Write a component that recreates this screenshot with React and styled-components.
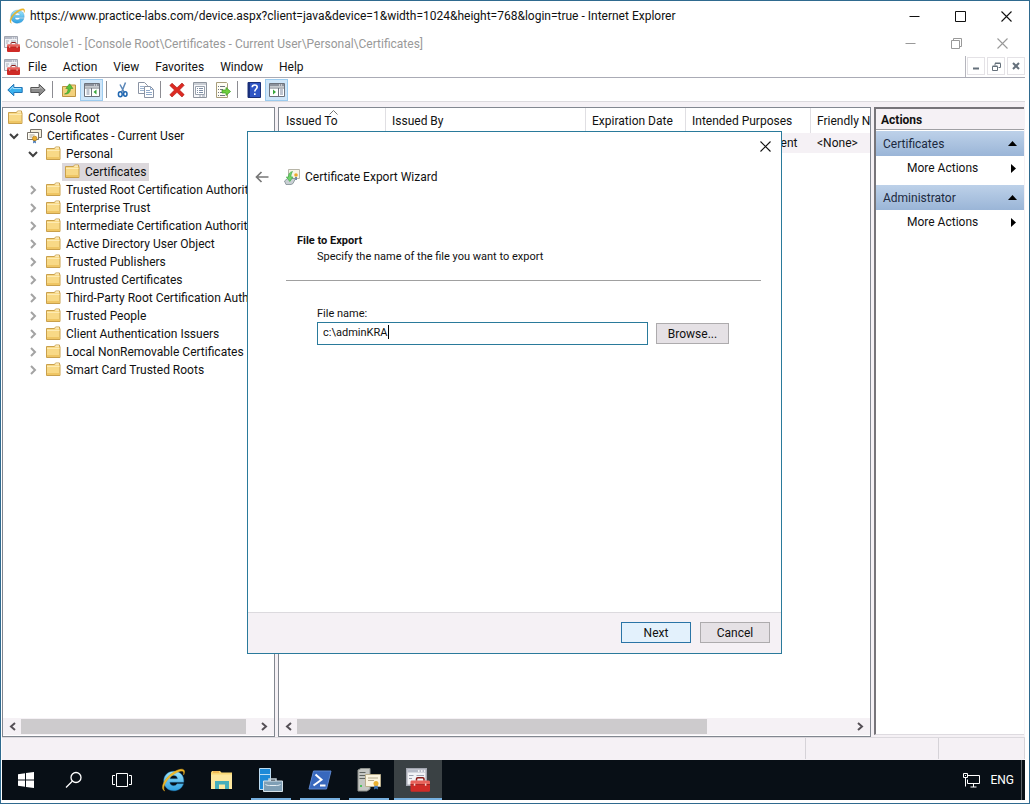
import React from "react";
import styled, { createGlobalStyle, css } from "styled-components";

const ui = 'Roboto, "Open Sans", "Noto Sans", sans-serif';
const line = "#828790";
const face = "#f5f1f5";
const accent = "#2a7a9b";

const Global = createGlobalStyle`
  *, *::before, *::after { box-sizing: border-box; }
  body { margin: 0; background: #fff; font: 12px/18px ${ui}; color: #111; }
  button { font: inherit; color: inherit; padding: 0; margin: 0; border: 0; background: none; }
  svg { display: block; flex: none; }
`;

const Desktop = styled.div`
  min-height: 100vh;
  display: flex;
  flex-direction: column;
  border: 1px solid #2f6a8f;
  background: #fff;
`;

const Session = styled.div`
  flex: 1;
  display: flex;
  flex-direction: column;
  padding: 0 4px 3px 1px;
`;

const TitleBar = styled.header`
  display: flex;
  align-items: center;
  height: 30px;
  padding-left: 8px;
  gap: 5px;
`;

const ConsoleTitle = styled(TitleBar)`
  height: 25px;
  padding-left: 2px;
  color: #999;
`;

const Title = styled.h1`
  margin: 0;
  flex: 1;
  min-width: 0;
  font-size: 12px;
  font-weight: 400;
  white-space: nowrap;
  overflow: hidden;
`;

const Controls = styled.div`
  display: flex;
`;

const WindowButton = styled.button`
  width: 46px;
  height: 24px;
  display: grid;
  place-items: center;
`;

const MenuBar = styled.nav`
  display: flex;
  align-items: center;
  height: 22px;
  padding-left: 2px;
  border-bottom: 1px solid #aaabb5;
`;

const MenuItem = styled.button`
  height: 20px;
  padding: 0 8px;
`;

const MdiControls = styled.div`
  display: flex;
  align-self: stretch;
  gap: 2px;
  margin-left: auto;
  padding: 1px 0 1px 1px;
  border-left: 1px solid #b5b5bd;
`;

const MdiButton = styled.button`
  width: 18px;
  height: 18px;
  display: grid;
  place-items: center;
  border: 1px solid #e4e2e6;
  background: #fff;
`;

const ToolBar = styled.div`
  display: flex;
  align-items: center;
  height: 24px;
  padding-left: 1px;
  border-bottom: 1px solid #dcdade;
`;

const ToolButton = styled.button`
  width: 23px;
  height: 22px;
  display: grid;
  place-items: center;
  border: 1px solid ${(p) => (p.$on ? "#9ccbee" : "transparent")};
  background: ${(p) => (p.$on ? "#cfe6f9" : "transparent")};
`;

const ToolRule = styled.span`
  width: 1px;
  height: 17px;
  margin: 0 4px 0 3px;
  background: #8c8c92;
`;

const Workspace = styled.main`
  position: relative;
  flex: 1;
  display: flex;
  padding: 5px 1px 0 0;
  gap: 3px;
  background: ${face};
`;

const Pane = styled.section`
  display: flex;
  flex-direction: column;
  min-width: 0;
  background: #fff;
  border: 1px solid ${line};
  overflow: hidden;
`;

const TreePane = styled(Pane)`
  flex: 0 0 273px;
`;

const ListPane = styled(Pane)`
  flex: 1;
`;

const Tree = styled.ul`
  list-style: none;
  margin: 0;
  padding: 1px 0 0;
  flex: 1;
`;

const TreeRow = styled.li`
  display: flex;
  align-items: center;
  height: 18px;
  padding-left: ${(p) => (p.$level ? p.$level * 19 - 14 : 2)}px;
`;

const Twisty = styled.button`
  flex: none;
  width: 16px;
  height: 18px;
  padding-left: 1px;
`;

const TwistyGap = styled.span`
  flex: none;
  width: 16px;
`;

const TreeLabel = styled.span`
  display: flex;
  align-items: center;
  gap: 4px;
  height: 18px;
  padding: 0 3px;
  white-space: nowrap;
  background: ${(p) => (p.$selected ? "#dcd8dc" : "transparent")};
`;

const ScrollBar = styled.div`
  display: flex;
  height: 17px;
  margin-bottom: 1px;
  padding: 1px 1px 1px 0;
  background: ${face};
`;

const ScrollArrow = styled.button`
  width: 18px;
  display: grid;
  place-items: center;
`;

const ScrollTrack = styled.div`
  flex: 1;
`;

const ScrollThumb = styled.div`
  width: ${(p) => p.$size}%;
  height: 100%;
  background: #cdcbcd;
`;

const ListBody = styled.div`
  flex: 1;
  overflow: hidden;
`;

const Table = styled.table`
  width: 100%;
  table-layout: fixed;
  border-collapse: separate;
  border-spacing: 0;
  white-space: nowrap;

  th, td { padding: 0 0 0 6px; text-align: left; font-weight: 400; overflow: hidden; }
  th { height: 25px; border-right: 1px solid #e0dfe3; }
  th:last-child { border-right: 0; }
  td { height: 20px; background: ${face}; }
`;

const SortHeader = styled.span`
  position: relative;
  display: block;
  padding-left: 1px;
`;

const SortMark = styled.svg`
  position: absolute;
  left: 44px;
  top: -2px;
`;

const ActionsPane = styled.aside`
  flex: 0 0 150px;
  background: #fff;
  border-top: 2px solid #77757a;
  border-left: 2px solid #77757a;
  border-bottom: 1px solid #dedbe0;
  margin-bottom: 2px;
`;

const ActionsTitle = styled.h2`
  margin: 0 0 1px;
  height: 21px;
  padding: 1px 0 0 5px;
  font-size: 12px;
  line-height: 20px;
  font-weight: 700;
  background: ${face};
  border-bottom: 1px solid #a0a0a4;
`;

const ActionHead = styled.button`
  display: flex;
  align-items: center;
  justify-content: space-between;
  width: 100%;
  height: 25px;
  padding: 0 7px;
  color: #1c2a40;
  background: linear-gradient(#bdd1e9, #9ab5d7);
`;

const ActionItem = styled.button`
  display: flex;
  align-items: center;
  justify-content: space-between;
  width: 100%;
  height: 24px;
  margin-bottom: 5px;
  padding: 0 8px 0 31px;
`;

const StatusBar = styled.footer`
  display: flex;
  height: 23px;
  padding-bottom: 1px;
  background: ${face};
  border-top: 1px solid #dcd9de;
`;

const StatusCell = styled.span`
  flex: ${(p) => (p.$width ? `0 0 ${p.$width}px` : 1)};
  border-right: 1px solid #d6d3d8;
`;

const Dialog = styled.div`
  position: absolute;
  left: 245px;
  top: 29px;
  width: 535px;
  height: 523px;
  display: flex;
  flex-direction: column;
  background: #fff;
  border: 1px solid ${accent};
`;

const DialogTop = styled.div`
  display: flex;
  justify-content: flex-end;
  padding: 2px 4px 0 0;
`;

const DialogClose = styled.button`
  width: 24px;
  height: 24px;
  display: grid;
  place-items: center;
`;

const DialogHead = styled.div`
  display: flex;
  align-items: center;
  height: 38px;
  padding-left: 6px;
`;

const BackButton = styled.button`
  width: 16px;
  height: 20px;
  margin-right: 14px;
  display: grid;
  place-items: center;
`;

const DialogTitle = styled.h2`
  margin: 0 0 0 5px;
  font-size: 12px;
  font-weight: 400;
`;

const DialogBody = styled.form`
  flex: 1;
  display: flex;
  flex-direction: column;
  font-size: 11px;
  line-height: 16px;
`;

const PageIntro = styled.div`
  margin: 37px 20px 0 38px;
  padding: 0 11px 15px;
  border-bottom: 1px solid #a0a0a0;
`;

const PageHeading = styled.h3`
  margin: 0;
  font-size: 11px;
  line-height: 16px;
  font-weight: 700;
`;

const PageText = styled.p`
  margin: 0 0 0 20px;
`;

const Field = styled.div`
  flex: 1;
  padding: 25px 52px 0 69px;
`;

const FieldRow = styled.div`
  display: flex;
  align-items: center;
  gap: 8px;
`;

const InputWrap = styled.span`
  position: relative;
  flex: 1;
  display: flex;
`;

const FileInput = styled.input`
  width: 100%;
  height: 23px;
  padding: 0 5px 2px;
  border: 1px solid ${accent};
  outline: 0;
  font: 11px/16px ${ui};
  color: #111;
  background: #fff;
`;

const Caret = styled.span`
  position: absolute;
  left: 71px;
  top: 3px;
  width: 1px;
  height: 14px;
  background: #000;
`;

const FieldLabel = styled.label`
  display: block;
`;

const PushButton = styled.button`
  width: ${(p) => p.$width}px;
  height: 21px;
  padding-top: 1px;
  line-height: 18px;
  font-size: 12px;
  border: 1px solid #adabad;
  background: #e5e1e5;
  ${(p) =>
    p.$primary &&
    css`
      border-color: #2a74a6;
      background: #e3f1fc;
    `}
`;

const DialogFooter = styled.div`
  display: flex;
  justify-content: flex-end;
  gap: 9px;
  height: 41px;
  padding: 9px 11px 0 0;
  background: ${face};
  border-top: 1px solid #dcdade;
`;

const TaskBar = styled.footer`
  display: flex;
  height: 40px;
  gap: 1px;
  background: #080f16;
  color: #fff;
`;

const TaskButton = styled.button`
  width: 48px;
  height: 40px;
  display: grid;
  place-items: center;
  background: ${(p) => (p.$active ? "#3a4144" : "transparent")};
  position: relative;

  &::after {
    content: "";
    position: absolute;
    bottom: 0;
    left: ${(p) => (p.$active ? 0 : 4)}px;
    right: ${(p) => (p.$active ? 0 : 4)}px;
    height: 2px;
    background: ${(p) => (p.$running ? "#76b0e0" : "transparent")};
  }
`;

const Tray = styled.div`
  display: flex;
  align-items: center;
  gap: 10px;
  margin-left: auto;
  padding-right: 6px;
`;

const ShowDesktop = styled.button`
  width: 4px;
  border-left: 1px solid #5b6166;
`;

function Svg({ w = 16, h = w, box = `0 0 ${w} ${h}`, children }) {
  return (
    <svg width={w} height={h} viewBox={box} fill="none" aria-hidden="true">
      {children}
    </svg>
  );
}

function IeIcon({ size, dark }) {
  const id = dark ? "ieDark" : "ieLight";
  return (
    <Svg w={size} box="0 0 24 24">
      <defs>
        <linearGradient id={id} x1="0" y1="0" x2="0" y2="1">
          <stop offset="0" stopColor="#9ce4fc" />
          <stop offset="1" stopColor="#2fa0e0" />
        </linearGradient>
      </defs>
      <path d="M22.500 15.800h-6.500c-.7 1.300-1.800 1.900-3.300 1.900-2.200 0-3.800-1.300-3.900-3.500h14c.5-6.600-3.600-11-9.900-11C7 3.200 2.700 7.300 2.700 13s4.200 9.800 10 9.800c4.600 0 8.300-2.500 9.800-7zM9 10.800c.3-2.100 1.700-3.300 3.800-3.300s3.500 1.200 3.700 3.300z" fill={`url(#${id})`} stroke="#1c7fc0" strokeWidth=".4" />
      <path d="M3.600 22.900C-.8 20.900 2.300 12.500 8.500 7.200 13.500 2.900 20.500-.3 22.800 2c1 1 .8 2.800-.2 4.800.4-1.800.2-3-.7-3.500-2.200-1.100-7.600 1.500-11.800 5C4.900 12.700 1 19.500 3.600 22.900z" fill="#f4bd2b" stroke="#dca11c" strokeWidth=".6" />
    </Svg>
  );
}

function ToolboxIcon({ size = 16 }) {
  return (
    <Svg w={size} box="0 0 16 16">
      <path d="M.5.5h13v11H.5z" fill="#f2f3f6" stroke="#a3a7b1" />
      <path d="M1 1h12v2H1z" fill="#b6bbc7" />
      <path d="M8 2h1M10 2h1M12 2h.7" stroke="#fff" />
      <path d="M2 5h3M2 7h2M7 5h5" stroke="#9aa0ae" strokeWidth=".8" />
      <path d="M7 8.500V7.300c0-.5.300-.8.800-.8h3.400c.5 0 .8.300.8.800v1.200" stroke="#8a1c18" />
      <path d="M3 9.200c0-.5.400-.9 1-.9h11c.6 0 1 .4 1 .9V11H3z" fill="#e8625b" />
      <path d="M3 11h13v4c0 .5-.4.900-1 .9H4c-.6 0-1-.4-1-.9z" fill="#cf2b27" />
      <path d="M3 11h13" stroke="#9c1915" strokeWidth=".5" />
      <path d="M5.200 10.300h1v1.500h-1zM12.600 10.300h1v1.500h-1z" fill="#f4d3ce" />
    </Svg>
  );
}

function FolderIcon() {
  return (
    <Svg>
      <path d="M.5 2.500h8l1-1.500h4v1.500h.5v11H.5z" fill="#f8d986" stroke="#c9a04c" />
      <path d="M9.500 2h3.500" stroke="#fff8df" />
      <path d="M1 4.500h12.500" stroke="#fdebb4" />
      <path d="M1 11h12.500v2H1z" fill="#efc665" />
    </Svg>
  );
}

function CertStoreIcon() {
  return (
    <Svg>
      <path d="M3.500 1.500h11v8h-11z" fill="#f4eedc" stroke="#77726a" />
      <path d="M.5 4.500h11v7H.5z" fill="#fffdf4" stroke="#77726a" />
      <path d="M2.500 7h5M2.500 9h3" stroke="#a9a396" />
      <path d="M6.500 11.500 6 15.500l1.500-1 1.500 1-.5-4z" fill="#3f76b7" />
      <circle cx="7.700" cy="10.500" r="2.300" fill="#e9ac2c" stroke="#b17a12" strokeWidth=".7" />
    </Svg>
  );
}

function ExportIcon() {
  return (
    <Svg>
      <path d="M4.500.5h11v9h-11z" fill="#f7f4e6" stroke="#b7b5a8" />
      <circle cx="12" cy="6" r="1.800" fill="#eaa92b" />
      <path d="M11 8h2v3h-2z" fill="#6f87a8" />
      <path d="m.5 12 3-2.500h8L9 14.500l-2 1H2z" fill="#c9d0d4" stroke="#7e8a90" strokeWidth=".8" />
      <path d="M8.500 2.500C5.500 3 4.500 5 4.500 8H2.300l3.500 4.500L9 8H7c0-2 .3-3.500 1.500-5.500z" fill="#6fd36a" stroke="#3ca344" strokeWidth=".6" />
    </Svg>
  );
}

const Chevron = ({ open }) => (
  <Svg w={10}>
    {open ? <path d="m1 3 4 4 4-4" stroke="#404040" strokeWidth="2" /> : <path d="m3 1 4 4-4 4" stroke="#a3a3a3" strokeWidth="2" />}
  </Svg>
);

const ScrollChevron = ({ right }) => (
  <Svg w={9}>
    <path d={right ? "m2 1 4 3.500L2 8" : "M7 1 3 4.500 7 8"} stroke="#555056" strokeWidth="2" />
  </Svg>
);

const CrossIcon = ({ color }) => (
  <Svg w={11}>
    <path d="m.5.5 10 10m0-10-10 10" stroke={color} strokeWidth="1.100" />
  </Svg>
);

const MinusIcon = ({ color }) => (
  <Svg w={11}>
    <path d="M.5 5.500h10" stroke={color} />
  </Svg>
);

const toolIcons = {
  back: (
    <Svg>
      <path d="m.8 8 6-5.700v3.200h8.400v5H6.800v3.200z" fill="#3ab1ee" stroke="#2274b5" />
      <path d="M3 7.500 6 4.800v1.700h8" stroke="#a8e0fb" />
    </Svg>
  ),
  forward: (
    <Svg>
      <path d="m15.200 8-6-5.700v3.200H.8v5h8.400v3.200z" fill="#8d8d8d" stroke="#555" />
      <path d="M1.500 6.500H10V4.800L12.500 7" stroke="#bcbcbc" />
    </Svg>
  ),
  up: (
    <Svg>
      <path d="M1.500 4.500h6l1-1.500h6v11.500h-13z" fill="#f3d17c" stroke="#bd9342" />
      <path d="M3.500 12c2.500-.5 3.500-2.500 3.500-5.500H4.800L8.500 1.800 12 6.500H9.500c0 3.500-2 6-6 5.500z" fill="#58c23c" stroke="#2f8d22" strokeWidth=".5" />
    </Svg>
  ),
  tree: (
    <Svg>
      <path d="M.5 1.500h15v13H.5z" fill="#fff" stroke="#6d727c" />
      <path d="M1 2h14v2.500H1z" fill="#8d929c" />
      <path d="M1 6h14M7.500 6v8" stroke="#6d727c" />
      <path d="M2.500 8h3M2.500 10h3M2.500 12h3" stroke="#7e8aa0" />
      <path d="m12.500 7.500-3 2.500 3 2.500z" fill="#38a63a" />
      <path d="M10 3h1m1 0h1" stroke="#fff" />
    </Svg>
  ),
  cut: (
    <Svg>
      <path d="m10.500.5-3.700 9.200M5 2.500l4.300 8" stroke="#5b87b8" strokeWidth="1.500" />
      <ellipse cx="5.300" cy="12.200" rx="1.900" ry="2.500" stroke="#1f66b0" strokeWidth="1.500" />
      <ellipse cx="10.300" cy="12" rx="1.700" ry="2.200" stroke="#1f66b0" strokeWidth="1.500" />
    </Svg>
  ),
  copy: (
    <Svg>
      <path d="M.5.500h6l3 3v8h-9z" fill="#fff" stroke="#8a93a3" />
      <path d="M2 4.500h4M2 6.500h5M2 8.500h4" stroke="#9db4d0" />
      <path d="M6.500 4.500h6l3 3v8h-9z" fill="#fff" stroke="#8a93a3" />
      <path d="M8 8.500h4M8 10.500h6M8 12.500h6M12.500 5v2.500H15" stroke="#8fa9c9" />
    </Svg>
  ),
  remove: (
    <Svg>
      <path d="M3 1.200 8 5.800 13 1l2.200 2.300L10.500 8l4.700 4.600L13 15l-5-4.700L3 15 .8 12.700 5.500 8 .8 3.500z" fill="#dd2a22" stroke="#a81511" strokeWidth=".6" />
    </Svg>
  ),
  props: (
    <Svg>
      <path d="M1.500.5h13v15h-13z" fill="#f7f8fa" stroke="#8f959f" />
      <path d="M2 2h12" stroke="#9da4af" />
      <path d="M3.500 4.500h9v8h-9z" fill="#fff" stroke="#9aa2ae" />
      <path d="M5 6.500h1m1 0h4M5 8.500h1m1 0h4M5 10.500h1m1 0h4" stroke="#7e8ea5" />
      <path d="M7 14h2m1 0h3" stroke="#9aa2ae" />
    </Svg>
  ),
  exportList: (
    <Svg>
      <path d="M1.500.5h10l1 1v14h-11z" fill="#fffdf3" stroke="#a89d7a" />
      <path d="M3 4.500h1m1 0h5M3 7.500h1m1 0h3M3 10.500h1m1 0h3M3 13.500h1m1 0h5" stroke="#6f7480" />
      <path d="M7 8h4V5.500L15.600 9.500 11 13.500V11H7z" fill="#6fcf3d" stroke="#3b9a22" strokeWidth=".7" />
    </Svg>
  ),
  help: (
    <Svg>
      <path d="M2 .5h12.500v15H2z" fill="#2f55c4" stroke="#1b3078" />
      <path d="M3 1v14" stroke="#16296b" strokeWidth="1.500" />
      <path d="M6.200 5.300c0-1.500 1-2.300 2.500-2.300s2.500.8 2.500 2.100c0 1.900-2.400 2-2.400 4.400M8.800 11.200v1.800" stroke="#fff" strokeWidth="1.600" />
    </Svg>
  ),
  actions: (
    <Svg>
      <path d="M.5 1.500h15v13H.5z" fill="#fff" stroke="#6d727c" />
      <path d="M1 2h14v2.500H1z" fill="#8d929c" />
      <path d="M1 6h14M9.500 6v8" stroke="#6d727c" />
      <path d="M11 8h3M11 10h3M11 12h3" stroke="#7e8aa0" />
      <path d="m4 7.500 3 2.500-3 2.500z" fill="#38a63a" />
      <path d="M10 3h1m1 0h1" stroke="#fff" />
    </Svg>
  ),
};

const tools = [
  ["back", "Back"],
  ["forward", "Forward"],
  null,
  ["up", "Up one level"],
  ["tree", "Show console tree", true],
  null,
  ["cut", "Cut"],
  ["copy", "Copy"],
  null,
  ["remove", "Delete"],
  ["props", "Properties"],
  ["exportList", "Export list"],
  null,
  ["help", "Help"],
  ["actions", "Show action pane", true],
];

const nodes = [
  { label: "Console Root", level: 0 },
  { label: "Certificates - Current User", level: 1, open: true, store: true },
  { label: "Personal", level: 2, open: true },
  { label: "Certificates", level: 3, selected: true },
  ...[
    "Trusted Root Certification Authorities",
    "Enterprise Trust",
    "Intermediate Certification Authorities",
    "Active Directory User Object",
    "Trusted Publishers",
    "Untrusted Certificates",
    "Third-Party Root Certification Authorities",
    "Trusted People",
    "Client Authentication Issuers",
    "Local NonRemovable Certificates",
    "Smart Card Trusted Roots",
  ].map((label) => ({ label, level: 2, open: false })),
];

const taskItems = [
  {
    name: "Start",
    icon: (
      <Svg w={16}>
        <path d="M0 2.200 7 1.200v6.300H0zM8 1l8-1v7.500H8zM0 8.500h7v6.300l-7-1zM8 8.500h8V16l-8-1z" fill="#fff" />
      </Svg>
    ),
  },
  {
    name: "Search",
    icon: (
      <Svg w={20} h={18}>
        <circle cx="11" cy="6.500" r="5" stroke="#fff" strokeWidth="1.300" />
        <path d="M7.500 10 1 16.500" stroke="#fff" strokeWidth="1.300" />
      </Svg>
    ),
  },
  {
    name: "Task View",
    icon: (
      <Svg w={24} h={16}>
        <path d="M4.500 1.500h11v13h-11zM3 3.500H.5v9H3M17 3.500h2.500v9H17" stroke="#fff" />
      </Svg>
    ),
  },
  { name: "Internet Explorer", icon: <IeIcon size={24} dark /> },
  {
    name: "File Explorer",
    icon: (
      <Svg w={22} h={20}>
        <path d="M0 2.500 1 1h8l1.500 1.500H21V19H0z" fill="#f8d775" />
        <path d="M1 4.500h20V19H0V4.500z" fill="#fde79e" />
        <path d="M2 2h6" stroke="#e69a3c" />
        <path d="M4 11h14v8h-4v-4.500H8V19H4z" fill="#46aebc" />
      </Svg>
    ),
  },
  {
    name: "Server Manager",
    running: true,
    icon: (
      <Svg w={24}>
        <path d="M.5.5h11v21H.5z" fill="#1d8ad8" stroke="#bcdcf2" />
        <path d="M1 6.500h10" stroke="#bcdcf2" />
        <path d="M10 13v-2h7v2" stroke="#c5d3dc" strokeWidth="1.500" />
        <path d="M4.500 13h19v10.500h-19z" fill="#7f9fb5" stroke="#d5e2ea" />
        <path d="M6.500 16.500c2 1 3 1 4 1h7c1 0 2 0 4-1" stroke="#e6eff4" />
      </Svg>
    ),
  },
  {
    name: "PowerShell",
    running: true,
    icon: (
      <Svg w={24} h={20}>
        <path d="M5.500 1h17.500l-4.500 18H1z" fill="#3868bd" stroke="#5b86d0" />
        <path d="m7.500 4.500 6 5.200-8 5.800M12 15.500h5.500" stroke="#fff" strokeWidth="2" />
      </Svg>
    ),
  },
  {
    name: "Certification Authority",
    running: true,
    icon: (
      <Svg w={24}>
        <path d="M1 2 4 .5h9V21l-3 2H1z" fill="#c5c7c3" stroke="#8d908c" />
        <path d="M2.500 4.500h6M2.500 7.500h6M2.500 10.500h6" stroke="#5f6460" />
        <path d="M3 18h2" stroke="#4cc25a" strokeWidth="2" />
        <path d="M8.500 6.500h15v12h-15z" fill="#fbf5e0" stroke="#b9ae8c" />
        <path d="M11 10h10M11 12.500h6" stroke="#b4a98b" />
        <path d="m17.500 17-.5 4.500 2-1 2 1-.5-4.500z" fill="#3f76b7" />
        <circle cx="19" cy="15.500" r="2.500" fill="#eab02f" />
      </Svg>
    ),
  },
  { name: "Management Console", running: true, active: true, icon: <ToolboxIcon size={24} /> },
];

function Scroll({ size, label }) {
  return (
    <ScrollBar>
      <ScrollArrow aria-label={`Scroll ${label} left`}>
        <ScrollChevron />
      </ScrollArrow>
      <ScrollTrack>
        <ScrollThumb $size={size} />
      </ScrollTrack>
      <ScrollArrow aria-label={`Scroll ${label} right`}>
        <ScrollChevron right />
      </ScrollArrow>
    </ScrollBar>
  );
}

function ExportDialog() {
  return (
    <Dialog role="dialog" aria-labelledby="wizard-title">
      <DialogTop>
        <DialogClose aria-label="Close wizard">
          <CrossIcon color="#111" />
        </DialogClose>
      </DialogTop>
      <DialogHead>
        <BackButton aria-label="Previous step">
          <Svg w={14} h={12}>
            <path d="M13.500 6H2M6.500 1 1.500 6l5 5" stroke="#777" strokeWidth="1.700" />
          </Svg>
        </BackButton>
        <ExportIcon />
        <DialogTitle id="wizard-title">Certificate Export Wizard</DialogTitle>
      </DialogHead>
      <DialogBody onSubmit={(e) => e.preventDefault()}>
        <PageIntro>
          <PageHeading>File to Export</PageHeading>
          <PageText>Specify the name of the file you want to export</PageText>
        </PageIntro>
        <Field>
          <FieldLabel htmlFor="file-name">File name:</FieldLabel>
          <FieldRow>
            <InputWrap>
              <FileInput id="file-name" type="text" defaultValue="c:\adminKRA" />
              <Caret />
            </InputWrap>
            <PushButton type="button" $width={73}>Browse...</PushButton>
          </FieldRow>
        </Field>
        <DialogFooter>
          <PushButton type="submit" $width={70} $primary>Next</PushButton>
          <PushButton type="button" $width={70}>Cancel</PushButton>
        </DialogFooter>
      </DialogBody>
    </Dialog>
  );
}

export default function App() {
  return (
    <>
      <Global />
      <Desktop>
        <TitleBar>
          <IeIcon size={16} />
          <Title>https://www.practice-labs.com/device.aspx?client=java&amp;device=1&amp;width=1024&amp;height=768&amp;login=true - Internet Explorer</Title>
          <Controls>
            <WindowButton aria-label="Minimize browser"><MinusIcon color="#111" /></WindowButton>
            <WindowButton aria-label="Maximize browser">
              <Svg w={11}><path d="M.5.5h10v10H.5z" stroke="#111" /></Svg>
            </WindowButton>
            <WindowButton aria-label="Close browser"><CrossIcon color="#111" /></WindowButton>
          </Controls>
        </TitleBar>
        <Session>
          <ConsoleTitle as="div">
            <ToolboxIcon />
            <Title as="h2">Console1 - [Console Root\Certificates - Current User\Personal\Certificates]</Title>
            <Controls>
              <WindowButton aria-label="Minimize console"><MinusIcon color="#999" /></WindowButton>
              <WindowButton aria-label="Restore console">
                <Svg w={11}><path d="M.5 2.500h8v8h-8zM2.500 2.500v-2h8v8h-2" stroke="#999" /></Svg>
              </WindowButton>
              <WindowButton aria-label="Close console"><CrossIcon color="#999" /></WindowButton>
            </Controls>
          </ConsoleTitle>
          <MenuBar aria-label="Console menu">
            <ToolboxIcon />
            {["File", "Action", "View", "Favorites", "Window", "Help"].map((m) => (
              <MenuItem key={m}>{m}</MenuItem>
            ))}
            <MdiControls>
              <MdiButton aria-label="Minimize view">
                <Svg w={8}><path d="M1 6.500h6" stroke="#65707b" strokeWidth="2" /></Svg>
              </MdiButton>
              <MdiButton aria-label="Restore view">
                <Svg w={9}><path d="M.5 4.500h5v4h-5zM3 3.500V1.500h5.500v4H6.500M.5 4h5M3 1h5.500" stroke="#65707b" /></Svg>
              </MdiButton>
              <MdiButton aria-label="Close view">
                <Svg w={8}><path d="m1 1 6 6m0-6L1 7" stroke="#65707b" strokeWidth="2" /></Svg>
              </MdiButton>
            </MdiControls>
          </MenuBar>
          <ToolBar role="toolbar" aria-label="Console tools">
            {tools.map((t, i) =>
              t ? (
                <ToolButton key={t[0]} aria-label={t[1]} $on={t[2]}>
                  {toolIcons[t[0]]}
                </ToolButton>
              ) : (
                <ToolRule key={i} />
              )
            )}
          </ToolBar>
          <Workspace>
            <TreePane aria-label="Console tree">
              <Tree>
                {nodes.map((n, i) => (
                  <TreeRow key={i} $level={n.level}>
                    {n.open !== undefined && (
                      <Twisty aria-label={`Toggle ${n.label}`}>
                        <Chevron open={n.open} />
                      </Twisty>
                    )}
                    {n.selected && <TwistyGap />}
                    <TreeLabel $selected={n.selected}>
                      {n.store ? <CertStoreIcon /> : <FolderIcon />}
                      {n.label}
                    </TreeLabel>
                  </TreeRow>
                ))}
              </Tree>
              <Scroll size={96} label="tree" />
            </TreePane>
            <ListPane aria-label="Certificates">
              <ListBody>
                <Table>
                  <colgroup>
                    <col width="107" />
                    <col width="200" />
                    <col width="100" />
                    <col width="125" />
                    <col />
                  </colgroup>
                  <thead>
                    <tr>
                      <th>
                        <SortHeader>
                          Issued To
                          <SortMark width="9" height="5" viewBox="0 0 9 5" fill="none">
                            <path d="m.5 4.500 4-4 4 4" stroke="#777" />
                          </SortMark>
                        </SortHeader>
                      </th>
                      <th>Issued By</th>
                      <th>Expiration Date</th>
                      <th>Intended Purposes</th>
                      <th>Friendly Name</th>
                    </tr>
                  </thead>
                  <tbody>
                    <tr>
                      <td />
                      <td />
                      <td />
                      <td>Key Recovery Agent</td>
                      <td>&lt;None&gt;</td>
                    </tr>
                  </tbody>
                </Table>
              </ListBody>
              <Scroll size={74} label="list" />
            </ListPane>
            <ActionsPane>
              <ActionsTitle>Actions</ActionsTitle>
              {["Certificates", "Administrator"].map((name) => (
                <React.Fragment key={name}>
                  <ActionHead>
                    {name}
                    <Svg w={9} h={5}><path d="M4.500 0 9 5H0z" fill="#000" /></Svg>
                  </ActionHead>
                  <ActionItem>
                    More Actions
                    <Svg w={5} h={9}><path d="m0 0 5 4.500L0 9z" fill="#000" /></Svg>
                  </ActionItem>
                </React.Fragment>
              ))}
            </ActionsPane>
            <ExportDialog />
          </Workspace>
          <StatusBar>
            <StatusCell />
            <StatusCell $width={133} />
            <StatusCell $width={86} />
          </StatusBar>
          <TaskBar>
            {taskItems.map((t) => (
              <TaskButton key={t.name} aria-label={t.name} $running={t.running} $active={t.active}>
                {t.icon}
              </TaskButton>
            ))}
            <Tray>
              <Svg w={17} h={15}>
                <path d="M5 2.500h11.500v8H4.500V6.500M10.500 11v3M7.500 14h6" stroke="#fff" />
                <path d="M.5.500h4v4h-4zM2.500 4.500v9" stroke="#fff" />
                <path d="M2 2h1v1H2z" fill="#fff" />
              </Svg>
              <span>ENG</span>
            </Tray>
            <ShowDesktop aria-label="Show desktop" />
          </TaskBar>
        </Session>
      </Desktop>
    </>
  );
}
